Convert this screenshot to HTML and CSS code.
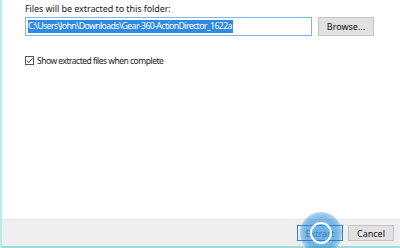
FILE: index.html
```html
<!DOCTYPE html>
<html>
<head>
    <link rel="stylesheet" href="styles.css">
</head>
<body>
    <div class="dialog">
        <div class="content">
            <div class="label">Files will be extracted to this folder:</div>
            <div class="path-row">
                <div class="path-input"><span class="selected">C:\Users\John\Downloads\Gear-360-ActionDirector_1622a</span></div>
                <button class="btn browse">Browse...</button>
            </div>
            <label class="check-row">
                <span class="checkbox">
                    <svg width="9" height="9" viewBox="0 0 9 9"><path d="M1.5 4.6 L3.6 6.7 L7.6 2.2" fill="none" stroke="#333" stroke-width="1"/></svg>
                </span>
                <span class="check-text">Show extracted files when complete</span>
            </label>
        </div>
        <div class="footer">
            <button class="btn primary">Extract</button>
            <button class="btn">Cancel</button>
            <div class="touch"><div class="ring"></div></div>
        </div>
    </div>
</body>
</html>
```

FILE: styles.css
```css
html, body {
    margin: 0;
    padding: 0;
    height: 100%;
}

body {
    font-family: "Noto Sans", "Open Sans", sans-serif;
    font-size: 9px;
    color: #1a1a1a;
    background-color: #fff;
    overflow: hidden;
}

.dialog {
    height: 248px;
    display: flex;
    flex-direction: column;
    border-left: 2px solid #b7ebe7;
    box-sizing: border-box;
}

.content {
    flex: 1;
    padding: 2px 0 0 23px;
}

.label {
    height: 14px;
    line-height: 14px;
    letter-spacing: -0.08px;
}

.path-row {
    display: flex;
    align-items: center;
    margin-top: 1px;
}

.path-input {
    width: 283px;
    height: 17px;
    border: 1px solid #7fb5ea;
    display: flex;
    align-items: center;
    padding-left: 2px;
    overflow: hidden;
    white-space: nowrap;
}

.selected {
    background-color: #2f8ae0;
    color: #fff;
    line-height: 13px;
    font-size: 8.8px;
    letter-spacing: -0.65px;
    padding-right: 1px;
}

.btn {
    font-family: inherit;
    font-size: 9px;
    color: #111;
    background-color: #e1e1e1;
    border: 1px solid #c4c4c4;
    height: 16px;
    width: 46px;
    padding: 0;
    margin: 0;
}

.browse {
    width: 56px;
    height: 19px;
    margin-left: 6px;
}

.check-row {
    display: flex;
    align-items: center;
    margin-top: 19px;
    gap: 3px;
}

.check-text {
    font-size: 8.5px;
    letter-spacing: -0.5px;
}

.checkbox {
    width: 7px;
    height: 7px;
    border: 1px solid #555;
    display: flex;
    align-items: center;
    justify-content: center;
    background: #fff;
}

.checkbox svg {
    flex: none;
}

.footer {
    position: relative;
    height: 26px;
    background-color: #efefef;
    border-top: 1px solid #e8e8e8;
    border-bottom: 2px solid #9fdcdc;
    display: flex;
    justify-content: flex-end;
    align-items: center;
    gap: 5px;
    padding-right: 6px;
}

.primary {
    border-color: #2f86d6;
    background-color: #e3eef9;
    color: #4a7fb0;
}

.touch {
    position: absolute;
    left: 298px;
    top: -8px;
    width: 42px;
    height: 42px;
    border-radius: 50%;
    background: radial-gradient(circle, rgba(30, 136, 210, 0.6) 0%, rgba(30, 136, 210, 0.55) 55%, rgba(30, 136, 210, 0.2) 78%, rgba(30, 136, 210, 0) 100%);
    display: flex;
    align-items: center;
    justify-content: center;
}

.ring {
    width: 18px;
    height: 18px;
    border: 2px solid #fff;
    border-radius: 50%;
}
```
